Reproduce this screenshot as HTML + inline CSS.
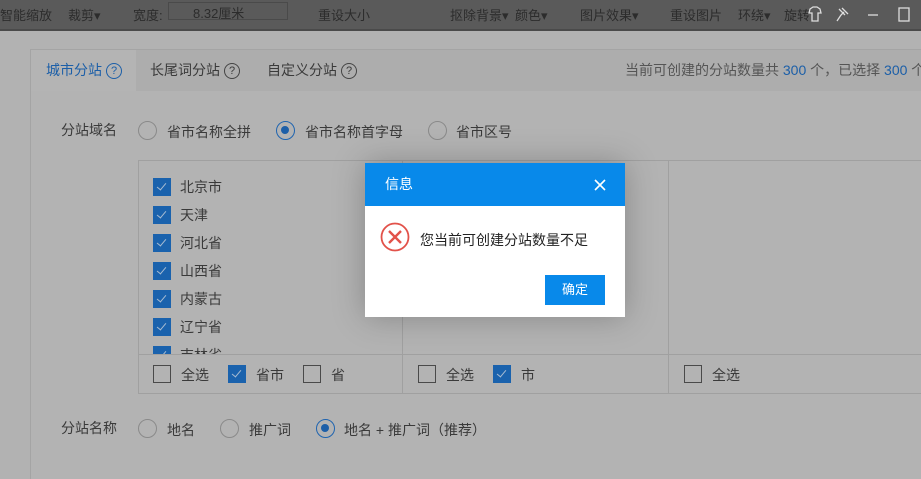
<!DOCTYPE html>
<html><head><meta charset="utf-8"><style>
*{margin:0;padding:0;box-sizing:border-box}
body{width:921px;height:474px;overflow:hidden;background:#b2b2b2;font-family:"Liberation Sans","Noto Sans CJK SC",sans-serif;font-size:14px;color:#3a3a3a;position:relative}
.top{position:absolute;left:0;top:0;width:921px;height:31px;background:#5a5a5a;border-bottom:2px solid #4a4a4a;color:#2c2c2c;font-size:13px}
.top span{position:absolute;top:5px}
.card{position:absolute;left:30px;top:49px;width:900px;height:430px;background:#b3b3b3;border-left:1px solid #a4a4a4;border-top:1px solid #a4a4a4}
.tabs{position:absolute;left:0;top:0;width:900px;height:41px;background:#adadad}
.tab{position:absolute;top:0;height:41px;line-height:41px}
.q{display:inline-block;width:16px;height:16px;border:1px solid #444;border-radius:50%;font-size:11px;line-height:14px;text-align:center;margin-left:4px;vertical-align:1px}
.abs{position:absolute}
.radio{position:absolute;width:19px;height:19px;border:1.5px solid #8a8a8a;border-radius:50%}
.radio.on{border-color:#1f64b0}
.radio.on:after{content:"";position:absolute;left:4px;top:4px;width:8px;height:8px;border-radius:50%;background:#1d5fa8}
.cb{position:absolute;width:18px;height:18px;border:1.5px solid #4a4a4a}
.cb.on{background:#1a62ad;border-color:#1a62ad}
.cb.on:after{content:"";position:absolute;left:5px;top:2px;width:4px;height:8px;border:solid #a8bcd2;border-width:0 1.5px 1.5px 0;transform:rotate(40deg)}
.dlg{position:absolute;left:365px;top:163px;width:260px;height:154px;background:#fff;box-shadow:0 0 30px rgba(0,0,0,.25)}
.dh{height:43px;background:#0889ea;color:#fff;line-height:43px;padding-left:20px;font-size:14px}
</style></head><body>
<div class="top">
<span style="left:0">智能缩放</span><span style="left:68px">裁剪▾</span><span style="left:133px">宽度:</span>
<span style="left:168px;top:2px;width:120px;height:18px;border:1px solid #4a4a4a;padding-left:24px">8.32厘米</span>
<span style="left:318px">重设大小</span><span style="left:450px">抠除背景▾</span><span style="left:515px">颜色▾</span>
<span style="left:580px">图片效果▾</span><span style="left:670px">重设图片</span><span style="left:738px">环绕▾</span><span style="left:784px">旋转</span>
<svg class="abs" style="left:806px;top:5px" width="110" height="18" viewBox="0 0 110 18" fill="none" stroke="#ddd" stroke-width="1.3"><path d="M4 4l3-2h4l3 2 1 4-3 0v8H6V8H3z"/><path d="M33 4l6 6M36 3l6 6M35 10l-4 6M38 7l-3 3"/><path d="M62 10h10"/><rect x="93" y="3" width="10" height="13"/></svg>
</div>
<div class="card">
<div class="tabs">
<div class="tab" style="left:0;width:105px;background:#b4b4b4;padding-left:15px;color:#1c5fa8">城市分站<span class="q" style="border-color:#1c5fa8">?</span></div>
<div class="tab" style="left:119px">长尾词分站<span class="q">?</span></div>
<div class="tab" style="left:236px">自定义分站<span class="q">?</span></div>
<div class="tab" style="left:594px;color:#555;width:320px;white-space:nowrap">当前可创建的分站数量共 <span style="color:#1c5fa8">300</span> 个，已选择 <span style="color:#1c5fa8">300</span> 个</div>
</div>
<div class="abs" style="left:30px;top:70px">分站域名</div>
<div class="radio" style="left:107px;top:71px"></div><div class="abs" style="left:136px;top:72px">省市名称全拼</div>
<div class="radio on" style="left:245px;top:71px"></div><div class="abs" style="left:274px;top:72px">省市名称首字母</div>
<div class="radio" style="left:397px;top:71px"></div><div class="abs" style="left:425px;top:72px">省市区号</div>
<div class="abs" style="left:107px;top:110px;width:800px;height:234px;border:1px solid #a0a0a0"></div>
<div class="abs" style="left:371px;top:110px;width:1px;height:234px;background:#a0a0a0"></div>
<div class="abs" style="left:637px;top:110px;width:1px;height:234px;background:#a0a0a0"></div>
<div class="abs" style="left:107px;top:304px;width:800px;height:1px;background:#a0a0a0"></div>
<div class="abs" style="left:108px;top:111px;width:262px;height:193px;overflow:hidden">
<div class="cb on" style="left:14px;top:17px"></div><div class="abs" style="left:41px;top:16px">北京市</div>
<div class="cb on" style="left:14px;top:45px"></div><div class="abs" style="left:41px;top:44px">天津</div>
<div class="cb on" style="left:14px;top:73px"></div><div class="abs" style="left:41px;top:72px">河北省</div>
<div class="cb on" style="left:14px;top:101px"></div><div class="abs" style="left:41px;top:100px">山西省</div>
<div class="cb on" style="left:14px;top:129px"></div><div class="abs" style="left:41px;top:128px">内蒙古</div>
<div class="cb on" style="left:14px;top:157px"></div><div class="abs" style="left:41px;top:156px">辽宁省</div>
<div class="cb on" style="left:14px;top:185px"></div><div class="abs" style="left:41px;top:184px">吉林省</div>
</div>
<div class="cb" style="left:122px;top:315px"></div><div class="abs" style="left:150px;top:315px">全选</div>
<div class="cb on" style="left:197px;top:315px"></div><div class="abs" style="left:225px;top:315px">省市</div>
<div class="cb" style="left:272px;top:315px"></div><div class="abs" style="left:300px;top:315px">省</div>
<div class="cb" style="left:387px;top:315px"></div><div class="abs" style="left:415px;top:315px">全选</div>
<div class="cb on" style="left:462px;top:315px"></div><div class="abs" style="left:490px;top:315px">市</div>
<div class="cb" style="left:653px;top:315px"></div><div class="abs" style="left:681px;top:315px">全选</div>
<div class="abs" style="left:30px;top:368px">分站名称</div>
<div class="radio" style="left:107px;top:369px"></div><div class="abs" style="left:136px;top:370px">地名</div>
<div class="radio" style="left:189px;top:369px"></div><div class="abs" style="left:218px;top:370px">推广词</div>
<div class="radio on" style="left:285px;top:369px"></div><div class="abs" style="left:313px;top:370px">地名 + 推广词（推荐）</div>
</div>
<div class="dlg">
<div class="dh">信息<svg class="abs" style="right:19px;top:16px" width="12" height="12" viewBox="0 0 12 12"><path d="M1 1L11 11M11 1L1 11" stroke="#fff" stroke-width="1.6"/></svg></div>
<svg class="abs" style="left:15px;top:59px" width="30" height="30" viewBox="0 0 30 30"><circle cx="15" cy="15" r="13.5" fill="none" stroke="#e2524a" stroke-width="1.8"/><path d="M9 9L21 21M21 9L9 21" stroke="#e2524a" stroke-width="2.4"/></svg>
<div class="abs" style="left:55px;top:67px;color:#222">您当前可创建分站数量不足</div>
<div class="abs" style="left:180px;top:112px;width:60px;height:30px;background:#0889ea;color:#fff;text-align:center;line-height:30px;font-size:13px">确定</div>
</div>
</body></html>
